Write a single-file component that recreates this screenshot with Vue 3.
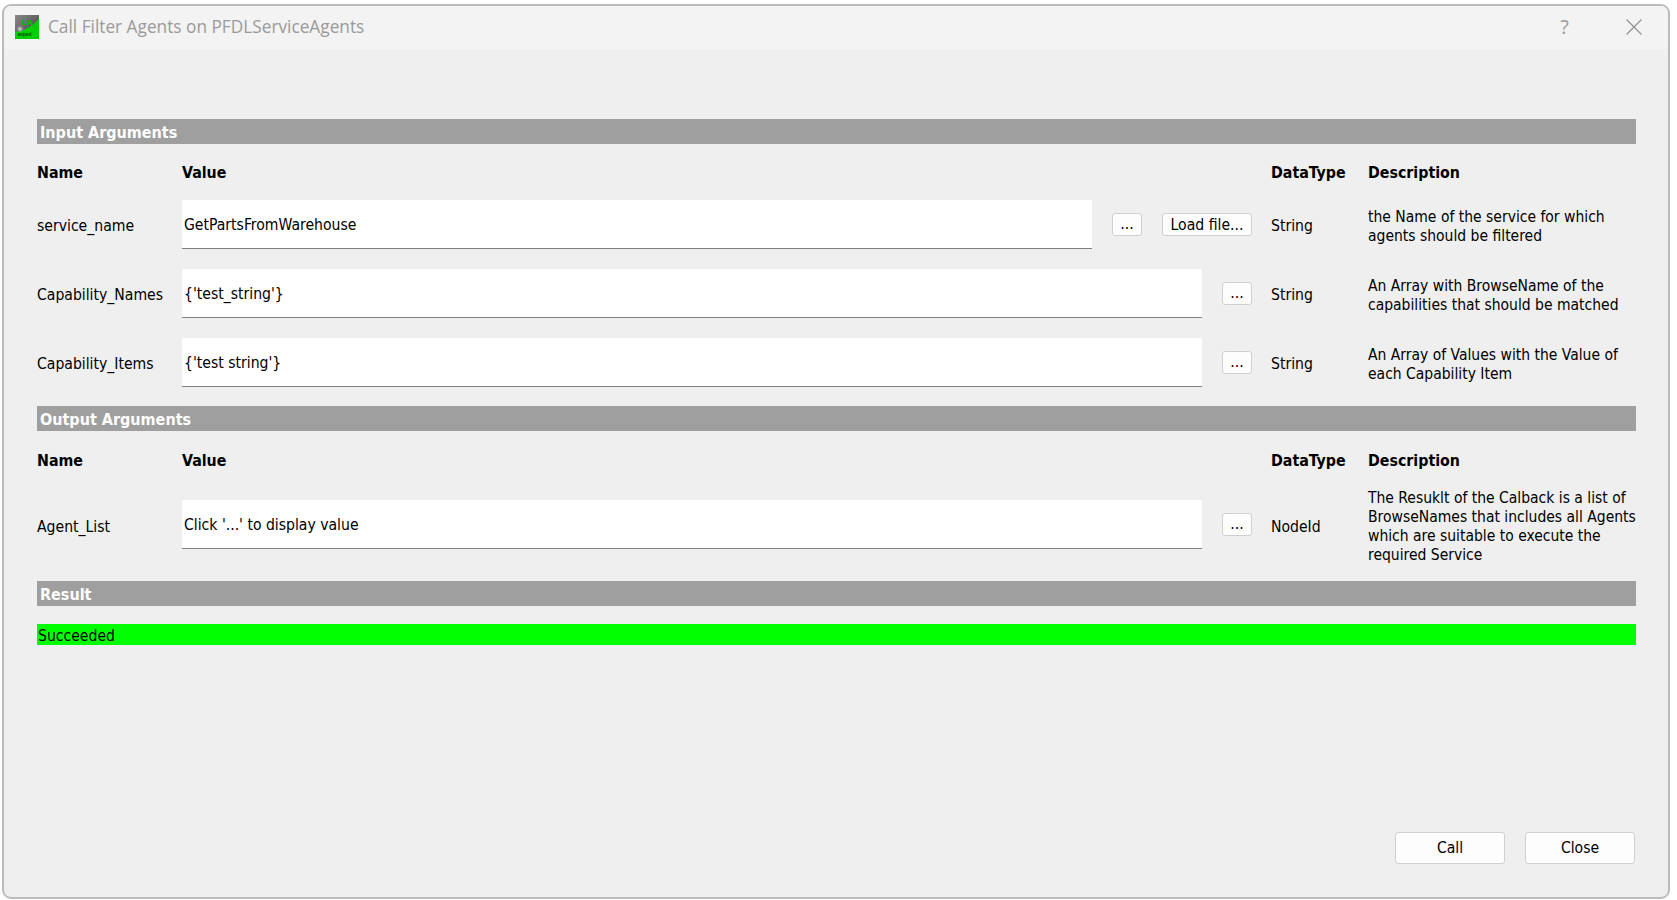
<script setup>
const inputs = [
  { name: 'service_name', value: 'GetPartsFromWarehouse', load: true, type: 'String', desc: 'the Name of the service for which agents should be filtered' },
  { name: 'Capability_Names', value: "{'test_string'}", type: 'String', desc: 'An Array with BrowseName of the capabilities that should be matched' },
  { name: 'Capability_Items', value: "{'test string'}", type: 'String', desc: 'An Array of Values with the Value of each Capability Item' },
]
const outputs = [
  { name: 'Agent_List', value: "Click '...' to display value", type: 'NodeId', desc: 'The Resuklt of the Calback is a list of BrowseNames that includes all Agents which are suitable to execute the required Service' },
]
</script>

<template>
  <div class="page">
    <div class="window">
      <header class="titlebar">
        <svg class="appicon" width="24" height="24" viewBox="0 0 24 24">
          <defs>
            <linearGradient id="g" x1="0" y1="0" x2="1" y2="1">
              <stop offset="0" stop-color="#8a8a8a" />
              <stop offset="1" stop-color="#3a3a3a" />
            </linearGradient>
            <radialGradient id="s" cx="0.5" cy="0.5" r="0.5">
              <stop offset="0" stop-color="#f4f4f4" />
              <stop offset="1" stop-color="#8a8a8a" stop-opacity="0" />
            </radialGradient>
          </defs>
          <rect width="24" height="24" fill="url(#g)" />
          <path d="M0 17 C8 16 18 12 24 3 V24 H0Z" fill="#00d000" />
          <circle cx="5" cy="14" r="4" fill="url(#s)" />
          <text x="12" y="10" font-size="8" font-weight="700" text-anchor="middle" fill="#00c000" font-family="Liberation Sans, sans-serif">UA</text>
          <text x="9.5" y="21" font-size="5" text-anchor="middle" fill="#111" font-family="Liberation Sans, sans-serif">axped</text>
        </svg>
        <span class="title">Call Filter Agents on PFDLServiceAgents</span>
        <span class="help">?</span>
        <svg class="close" width="16" height="16" viewBox="0 0 16 16">
          <path d="M0.5 0.5 L15.5 15.5 M15.5 0.5 L0.5 15.5" stroke="#8e8e8e" stroke-width="1.1" fill="none" />
        </svg>
      </header>

      <main class="content">
        <div class="bar">Input Arguments</div>
        <div class="grid grid-in">
          <b>Name</b><b>Value</b><b>DataType</b><b>Description</b>
          <template v-for="row in inputs" :key="row.name">
            <span>{{ row.name }}</span>
            <div class="value">
              <div class="field">{{ row.value }}</div>
              <button class="btn dots">...</button>
              <button v-if="row.load" class="btn load">Load file...</button>
            </div>
            <span>{{ row.type }}</span>
            <p class="desc">{{ row.desc }}</p>
          </template>
        </div>

        <div class="bar">Output Arguments</div>
        <div class="grid grid-out">
          <b>Name</b><b>Value</b><b>DataType</b><b>Description</b>
          <template v-for="row in outputs" :key="row.name">
            <span>{{ row.name }}</span>
            <div class="value">
              <div class="field">{{ row.value }}</div>
              <button class="btn dots">...</button>
            </div>
            <span>{{ row.type }}</span>
            <p class="desc">{{ row.desc }}</p>
          </template>
        </div>

        <div class="bar">Result</div>
        <div class="status">Succeeded</div>

        <div class="actions">
          <button class="btn action">Call</button>
          <button class="btn action">Close</button>
        </div>
      </main>
    </div>
  </div>
</template>

<style>
html, body { margin: 0; background: #fff; }
</style>

<style scoped>
.page {
  width: 1677px;
  height: 900px;
  padding: 4px 7px 1px 2px;
  box-sizing: border-box;
  overflow: hidden;
}
.window {
  height: 100%;
  box-sizing: border-box;
  border: 2px solid #bcbcbc;
  border-radius: 9px;
  background: #efefef;
  overflow: hidden;
  display: flex;
  flex-direction: column;
  font-family: "DejaVu Sans Condensed", "DejaVu Sans", sans-serif;
  font-size: 15.6px;
  line-height: 19px;
  color: #000;
}
.titlebar {
  height: 43px;
  flex: none;
  background: #f3f3f3;
  display: flex;
  align-items: center;
  padding: 0 26px 2px 11px;
  box-sizing: border-box;
  font-family: "Open Sans", sans-serif;
}
.appicon { flex: none; }
.title {
  margin-left: 9px;
  font-size: 17.25px;
  color: #9a9a9a;
  flex: 1;
}
.help {
  font-size: 20px;
  color: #9a9a9a;
  margin-right: 57px;
}
.close { flex: none; }
.content {
  flex: 1;
  padding: 70px 32px 0 33px;
  display: flex;
  flex-direction: column;
  min-height: 0;
}
.bar {
  height: 25px;
  flex: none;
  background: #9f9f9f;
  color: #fff;
  font-weight: 700;
  font-size: 16px;
  line-height: 27px;
  padding-left: 3px;
}
.grid {
  display: grid;
  grid-template-columns: 145px 1089px 97px 268px;
  align-items: center;
}
.grid b { font-size: 15.8px; margin-top: 4px; }
.grid span { margin-top: 4px; }
.grid-in {
  grid-template-rows: 20px 49px 49px 49px;
  row-gap: 20px;
  padding: 16px 0 19px;
}
.grid-out {
  grid-template-rows: 20px 76px;
  row-gap: 18px;
  padding: 17px 0 19px;
}
.grid-out span { margin-top: 6px; }
.value {
  display: flex;
  align-items: center;
  gap: 20px;
  padding-right: 19px;
}
.field {
  flex: 1;
  height: 49px;
  box-sizing: border-box;
  background: #fff;
  border-bottom: 1px solid #808080;
  line-height: 51px;
  padding-left: 2px;
}
.desc {
  margin: 4px -6px 0 0;
  font-size: 15.5px;
}
.grid-out .desc { margin-top: 6px; }
.btn {
  box-sizing: border-box;
  font: inherit;
  color: #000;
  background: #fdfdfd;
  border: 1px solid #d0d0d0;
  border-radius: 3px;
  padding: 0;
  flex: none;
}
.dots { width: 30px; height: 23px; }
.load { width: 90px; height: 23px; padding-top: 2px; }
.status {
  margin-top: 18px;
  height: 21px;
  flex: none;
  background: #00ff00;
  line-height: 24px;
  padding-left: 1px;
}
.actions {
  margin-top: auto;
  margin-bottom: 33px;
  display: flex;
  justify-content: flex-end;
  gap: 20px;
  padding-right: 1px;
}
.action { width: 110px; height: 32px; }
</style>
